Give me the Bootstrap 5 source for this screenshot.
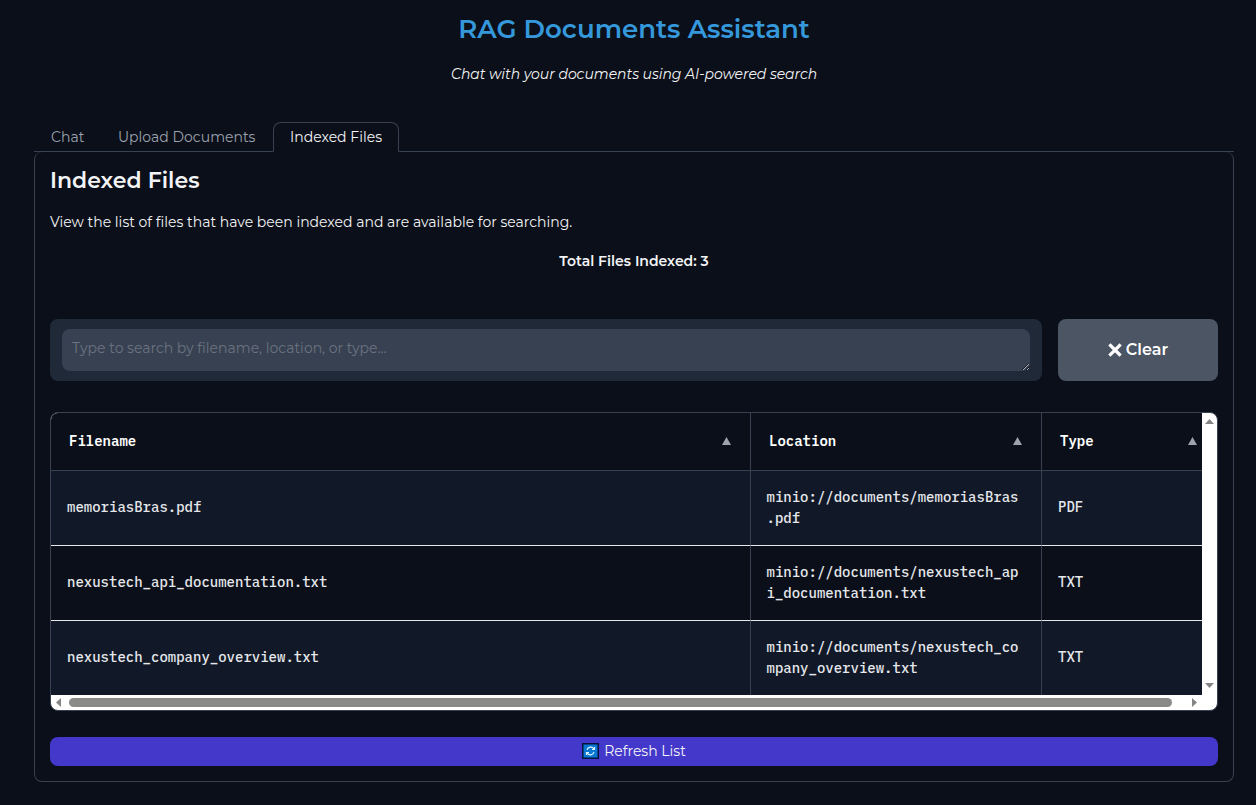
<!DOCTYPE html>
<html lang="en">
<head>
<meta charset="utf-8">
<meta name="viewport" content="width=device-width, initial-scale=1">
<title>RAG Documents Assistant</title>
<link rel="stylesheet" href="https://cdn.jsdelivr.net/npm/bootstrap@5.3.0/dist/css/bootstrap.min.css">
<style>
body{background:#0b0f19;color:#f3f4f6;font-family:Montserrat,Inter,sans-serif;font-size:14px;line-height:20px;height:805px;overflow:hidden}
.shell{width:1200px;margin-left:34px}
.title{color:#3498db;font-size:26px;line-height:34px;font-weight:600;padding-top:12px;margin:0}
.subtitle{margin:18px 0 0;font-style:italic;letter-spacing:-.04px;color:#f3f4f6}
.nav-tabs{margin-top:38px;height:30px;border-bottom:1px solid #374151;--bs-nav-tabs-border-width:1px}
.nav-tabs .nav-link{height:30px;padding:4px 16px;color:#9ca3af;border-radius:8px 8px 0 0;white-space:nowrap}
.nav-tabs .nav-link.active{color:#f3f4f6;background:#0b0f19;border-color:#374151 #374151 #0b0f19}
.w-chat{width:67px}.w-upload{width:172px}.w-files{width:126px}
.panel{height:630px;border:1px solid #374151;border-top:0;border-radius:8px;padding:1px 15px 0}
.panel h2{font-size:22px;line-height:30px;font-weight:600;margin:13px 0 0}
.intro{margin:16px 0 0}
.total{margin:19px 0 0;font-weight:600}
.search-row{margin-top:48px;height:62px;gap:16px}
.search-box{background:#1f2937;border-radius:8px;padding:10px 12px}
.search-box textarea{height:42px;min-height:42px;background:#374151;border:0;border-radius:8px;padding:9px 10px;font-size:14px;line-height:20px;overflow:hidden;color:#f3f4f6;resize:vertical}
.search-box textarea::placeholder{color:#6b7280}
.btn-clear{width:160px;background:#4b5563;border:0;border-radius:8px;color:#fff;font-weight:600;font-size:16px}
.btn-clear span{padding-bottom:1px}
.grid-frame{height:299px;margin-top:31px;border:1px solid #374151;border-radius:8px;overflow:hidden;background:#fff}
.files{table-layout:fixed;width:1151px;margin:0;border-collapse:separate;border-spacing:0;font:14px/21px "IBM Plex Mono","Liberation Mono",monospace;color:#e5e7eb}
.files th{height:58px;background:#0b0f19;border-right:1px solid #374151;border-bottom:1px solid #374151;padding:0 18px;color:#fff;font-weight:600;vertical-align:middle}
.files td{height:75px;background:#0b0f19;border-right:1px solid #374151;border-bottom:1px solid #e5e7eb;padding:0 16px 1px;vertical-align:middle;line-break:anywhere;font-weight:500}
.files td:nth-child(2){padding:0 15.5px}
.files tr.alt td{background:#111827}
.files th:last-child,.files td:last-child{border-right:0}
.files tr:last-child td{border-bottom:0;height:74px}
.sort{width:9px;height:8px;margin:0 1px 2px 0;fill:#9ca3af}
.files th:last-child{padding-right:4px}
.bar-v{width:15px;padding:6px 0 7px}
.bar-h{height:15px;width:1151px;padding:0 5px}
.thumb{height:9px;background:#8a8a88;border-radius:5px;width:1103px;margin-left:-4px}
.gray{fill:#858585}
.btn-refresh{margin-top:26px;height:29px;background:#4338ca;border:0;border-radius:8px;color:#f3f4f6;font-size:14px;padding:0 0 2px;line-height:20px}
</style>
</head>
<body>
<main class="shell">
<header class="text-center">
<h1 class="title"><span>RAG Documents Assistant</span></h1>
<p class="subtitle"><span>Chat with your documents using AI-powered search</span></p>
</header>
<ul class="nav nav-tabs flex-nowrap">
<li class="nav-item"><a class="nav-link w-chat" href="#">Chat</a></li>
<li class="nav-item"><a class="nav-link w-upload" href="#">Upload Documents</a></li>
<li class="nav-item"><a class="nav-link active w-files" href="#">Indexed Files</a></li>
</ul>
<section class="panel d-flex flex-column">
<h2><span>Indexed Files</span></h2>
<p class="intro"><span>View the list of files that have been indexed and are available for searching.</span></p>
<p class="total text-center"><span>Total Files Indexed: 3</span></p>
<div class="search-row d-flex">
<div class="search-box flex-grow-1"><textarea class="d-block w-100" rows="1" placeholder="Type to search by filename, location, or type..."></textarea></div>
<button class="btn btn-clear d-flex align-items-center justify-content-center p-0"><svg class="me-1" width="14" height="14" viewBox="0 0 14 14" stroke="#fff" stroke-width="3.2" stroke-linecap="square"><path d="M2.500 2.500l9 9M11.500 2.500l-9 9"/></svg><span>Clear</span></button>
</div>
<div class="grid-frame d-flex flex-column">
<div class="d-flex">
<table class="files">
<colgroup><col style="width:700px"><col style="width:291px"><col style="width:160px"></colgroup>
<thead><tr>
<th><div class="d-flex align-items-center justify-content-between"><span>Filename</span><svg class="sort" viewBox="0 0 9 8"><path d="M4.5 0L9 8H0z"/></svg></div></th>
<th><div class="d-flex align-items-center justify-content-between"><span>Location</span><svg class="sort" viewBox="0 0 9 8"><path d="M4.5 0L9 8H0z"/></svg></div></th>
<th><div class="d-flex align-items-center justify-content-between"><span>Type</span><svg class="sort" viewBox="0 0 9 8"><path d="M4.5 0L9 8H0z"/></svg></div></th>
</tr></thead>
<tbody>
<tr class="alt"><td>memoriasBras.pdf</td><td>minio://documents/memoriasBras.pdf</td><td>PDF</td></tr>
<tr><td>nexustech_api_documentation.txt</td><td>minio://documents/nexustech_api_documentation.txt</td><td>TXT</td></tr>
<tr class="alt"><td>nexustech_company_overview.txt</td><td>minio://documents/nexustech_company_overview.txt</td><td>TXT</td></tr>
</tbody>
</table>
<div class="bar-v d-flex flex-column align-items-center justify-content-between"><svg width="9" height="5" class="gray"><path d="M0 5L4.5 0L9 5z"/></svg><svg width="9" height="5" class="gray"><path d="M0 0L4.5 5L9 0z"/></svg></div>
</div>
<div class="bar-h d-flex align-items-center justify-content-between"><svg width="5" height="9" class="gray"><path d="M5 0L0 4.5L5 9z"/></svg><div class="thumb"></div><svg width="5" height="9" class="gray ms-2"><path d="M0 0L5 4.5L0 9z"/></svg></div>
</div>
<button class="btn btn-refresh d-flex align-items-center justify-content-center"><svg width="17" height="16" viewBox="0 0 17 16" style="margin-right:5px"><path fill="#05143a" d="M0 0h17v16H0z"/><path fill="#0878d4" d="M1.500 1.500h14v13h-14z"/><path d="M5 6.800a3.800 3.800 0 0 1 6.800-1M12 9.200a3.800 3.800 0 0 1-6.800 1M12.500 4v2.500H10M4.500 12V9.500H7" fill="none" stroke="#dff3ff" stroke-width="1.200"/></svg><span>Refresh List</span></button>
</section>
</main>
<script src="https://cdn.jsdelivr.net/npm/bootstrap@5.3.0/dist/js/bootstrap.bundle.min.js"></script>
</body>
</html>
